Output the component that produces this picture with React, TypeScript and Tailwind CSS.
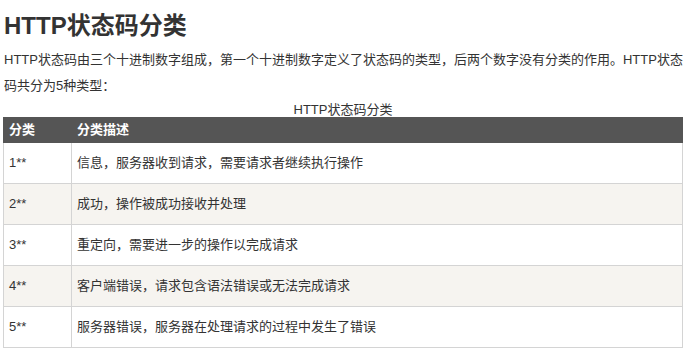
import React from "react";

const rows: [string, string][] = [
  ["1**", "信息，服务器收到请求，需要请求者继续执行操作"],
  ["2**", "成功，操作被成功接收并处理"],
  ["3**", "重定向，需要进一步的操作以完成请求"],
  ["4**", "客户端错误，请求包含语法错误或无法完成请求"],
  ["5**", "服务器错误，服务器在处理请求的过程中发生了错误"],
];

export default function App() {
  return (
    <div
      className="w-[687px] h-[353px] bg-white px-[3px] overflow-hidden text-[#333]"
      style={{ fontFamily: '"Liberation Sans", "Noto Sans CJK SC", sans-serif' }}
    >
      <h1 className="text-[24px] font-bold leading-[29px] pt-[11px] pl-px">HTTP状态码分类</h1>
      <p className="text-[13px] leading-[26px] mt-[7px] pl-px">
        HTTP状态码由三个十进制数字组成，第一个十进制数字定义了状态码的类型，后两个数字没有分类的作用。HTTP状态码共分为5种类型：
      </p>
      <table className="w-[680px] border-collapse text-[13px]">
        <caption className="text-[13px] leading-[15px] pt-[3px] text-center">HTTP状态码分类</caption>
        <thead>
          <tr>
            <th className="w-[68px] bg-[#555] text-white border border-[#555] text-left text-[13px] font-bold leading-[18px] p-[3px] pl-[5px]">
              分类
            </th>
            <th className="bg-[#555] text-white border border-[#555] text-left text-[13px] font-bold leading-[18px] p-[3px] pl-[5px]">
              分类描述
            </th>
          </tr>
        </thead>
        <tbody>
          {rows.map(([c, d], i) => (
            <tr key={c} className={i % 2 === 1 ? "bg-[#f6f4f0]" : "bg-white"}>
              <td className="border border-[#d4d4d4] px-[5px] py-[7px] leading-[26px] align-top">{c}</td>
              <td className="border border-[#d4d4d4] px-[5px] py-[7px] leading-[26px] align-top">{d}</td>
            </tr>
          ))}
        </tbody>
      </table>
    </div>
  );
}
